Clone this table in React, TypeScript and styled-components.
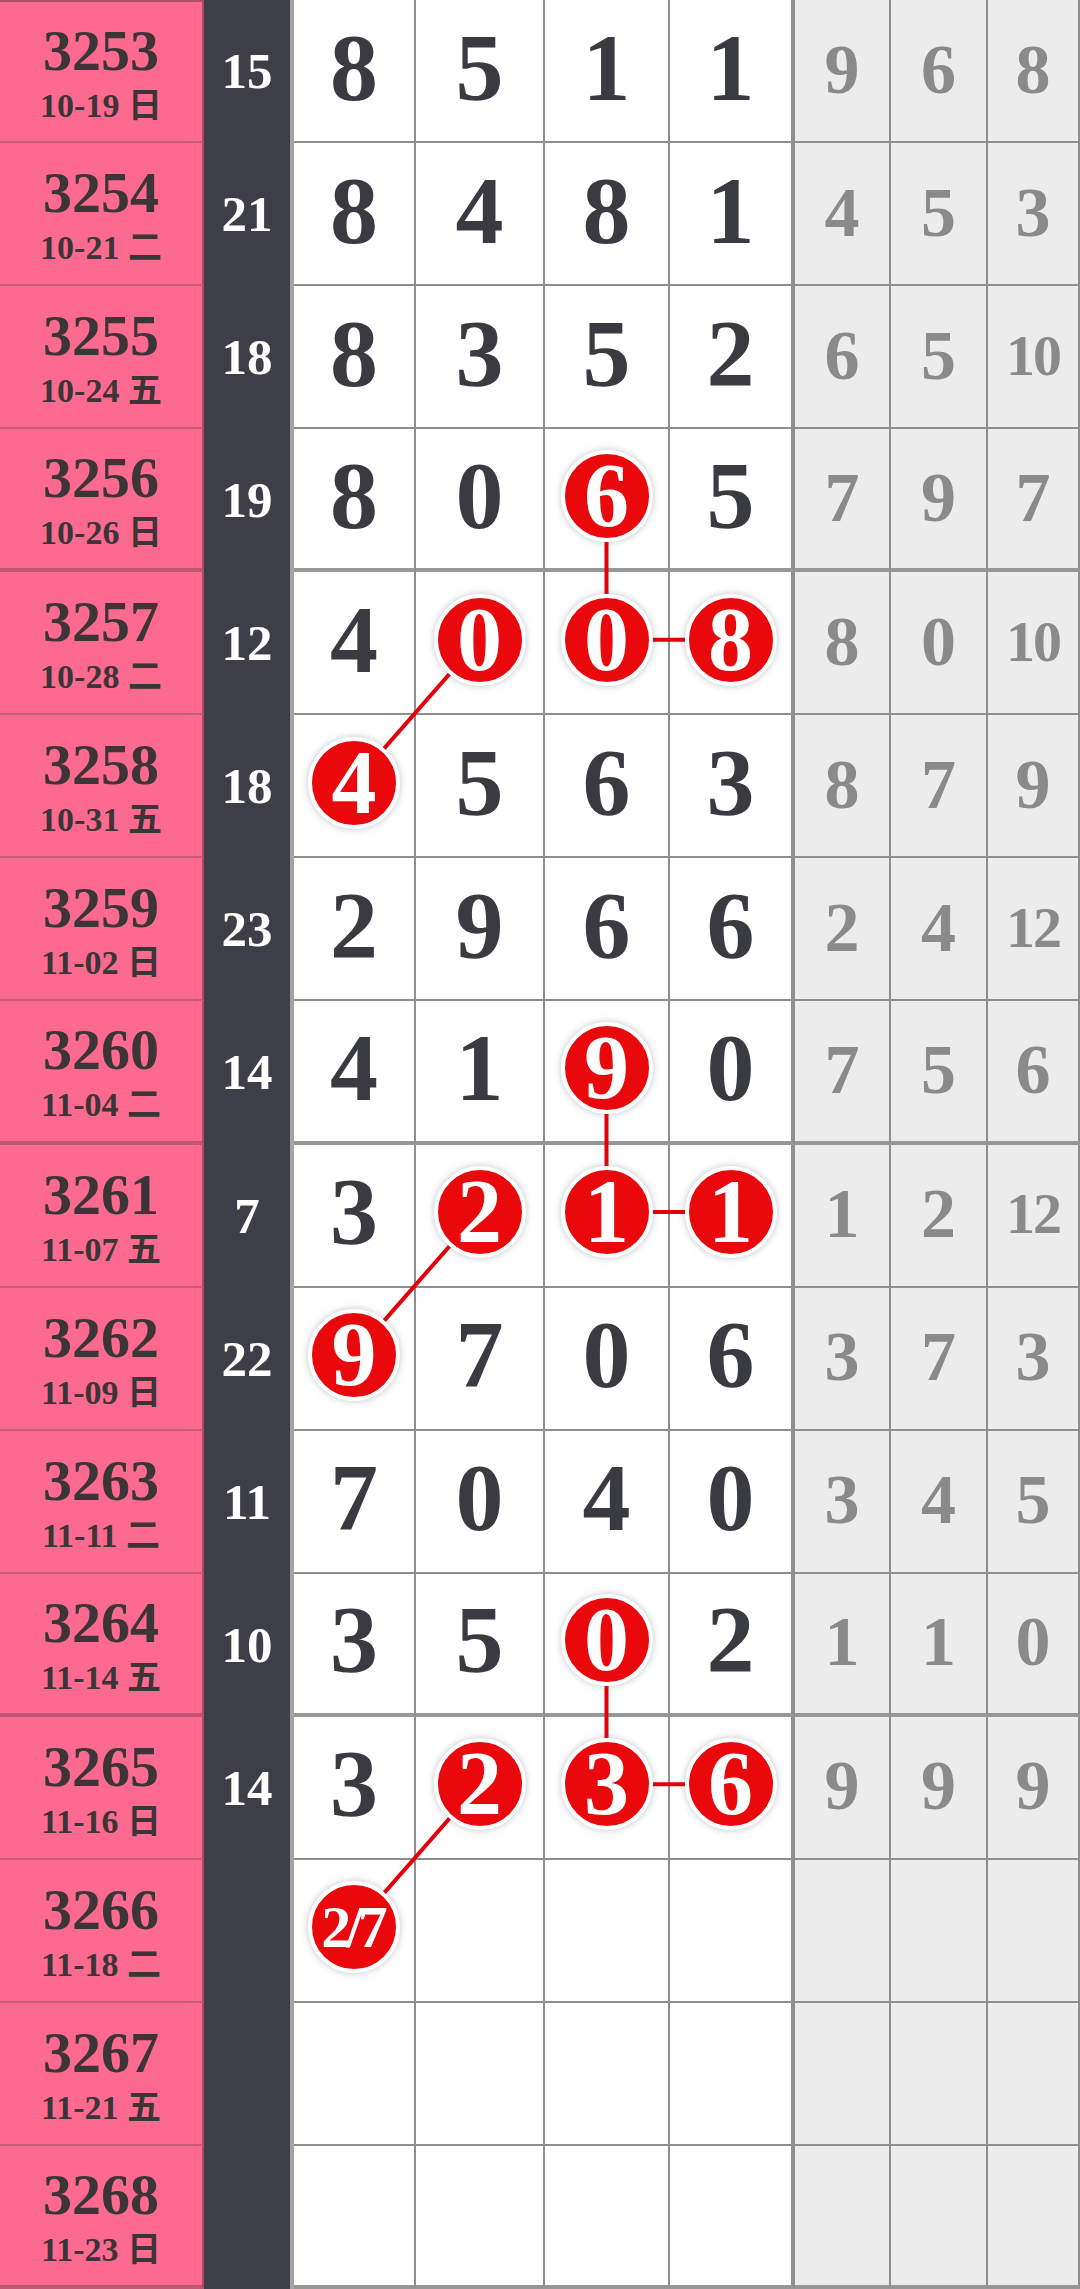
import React from 'react'
import styled, { createGlobalStyle } from 'styled-components'

const ROW_H = 2289 / 16
const COLS = [204, 90, 122, 129, 125, 125, 96, 97, 92]
const BORDERS = [2, 4, 2, 2, 2, 4, 2, 2, 2]

type Row = {
  id: string
  date: string
  wd: string
  sum: string
  d: string[]
  g: string[]
  balls?: number[]
}

const ROWS: Row[] = [
  { id: '3253', date: '10-19', wd: '日', sum: '15', d: ['8', '5', '1', '1'], g: ['9', '6', '8'] },
  { id: '3254', date: '10-21', wd: '二', sum: '21', d: ['8', '4', '8', '1'], g: ['4', '5', '3'] },
  { id: '3255', date: '10-24', wd: '五', sum: '18', d: ['8', '3', '5', '2'], g: ['6', '5', '10'] },
  { id: '3256', date: '10-26', wd: '日', sum: '19', d: ['8', '0', '6', '5'], g: ['7', '9', '7'], balls: [2] },
  { id: '3257', date: '10-28', wd: '二', sum: '12', d: ['4', '0', '0', '8'], g: ['8', '0', '10'], balls: [1, 2, 3] },
  { id: '3258', date: '10-31', wd: '五', sum: '18', d: ['4', '5', '6', '3'], g: ['8', '7', '9'], balls: [0] },
  { id: '3259', date: '11-02', wd: '日', sum: '23', d: ['2', '9', '6', '6'], g: ['2', '4', '12'] },
  { id: '3260', date: '11-04', wd: '二', sum: '14', d: ['4', '1', '9', '0'], g: ['7', '5', '6'], balls: [2] },
  { id: '3261', date: '11-07', wd: '五', sum: '7', d: ['3', '2', '1', '1'], g: ['1', '2', '12'], balls: [1, 2, 3] },
  { id: '3262', date: '11-09', wd: '日', sum: '22', d: ['9', '7', '0', '6'], g: ['3', '7', '3'], balls: [0] },
  { id: '3263', date: '11-11', wd: '二', sum: '11', d: ['7', '0', '4', '0'], g: ['3', '4', '5'] },
  { id: '3264', date: '11-14', wd: '五', sum: '10', d: ['3', '5', '0', '2'], g: ['1', '1', '0'], balls: [2] },
  { id: '3265', date: '11-16', wd: '日', sum: '14', d: ['3', '2', '3', '6'], g: ['9', '9', '9'], balls: [1, 2, 3] },
  { id: '3266', date: '11-18', wd: '二', sum: '', d: ['2/7', '', '', ''], g: ['', '', ''], balls: [0] },
  { id: '3267', date: '11-21', wd: '五', sum: '', d: ['', '', '', ''], g: ['', '', ''] },
  { id: '3268', date: '11-23', wd: '日', sum: '', d: ['', '', '', ''], g: ['', '', ''] },
]

// rows where a pattern starts: 6 -> 0-0-8 -> 4
const LINK_ROWS = [3, 7, 11]

const GlobalStyle = createGlobalStyle`
  html, body {
    margin: 0;
    background: #fff;
  }
  body {
    font-family: "Liberation Serif", "Noto Sans CJK SC", serif;
  }
`

const Board = styled.div`
  position: relative;
  width: 1080px;
  height: 2289px;
  overflow: hidden;
  display: grid;
  grid-template-columns: ${COLS.map((c) => `${c}px`).join(' ')};
  grid-template-rows: repeat(16, 1fr);
  font-weight: 700;
`

const IssueCell = styled.div<{ $end: boolean; $first: boolean }>`
  box-sizing: border-box;
  background: #fc6b8f;
  border-right: 2px solid #a94a63;
  border-top: ${({ $first }) => ($first ? '2px solid #b25068' : 'none')};
  border-bottom: ${({ $end }) => ($end ? '4px solid #bd5670' : '2px solid #c65c77')};
  padding-top: 5px;
  display: flex;
  flex-direction: column;
  align-items: center;
  justify-content: center;
  gap: 6px;
  color: #3b3537;
`

const Issue = styled.div`
  font-size: 58px;
  line-height: 58px;
`

const DateText = styled.div`
  font-size: 34px;
  line-height: 40px;
  white-space: nowrap;
`

const SumCell = styled.div`
  box-sizing: border-box;
  background: #3e3e48;
  border-right: 4px solid #a3a3a3;
  display: flex;
  align-items: center;
  justify-content: center;
  color: #fff;
  font-size: 51px;
  line-height: 1;
`

const DrawCell = styled.div<{ $end: boolean; $last: boolean }>`
  box-sizing: border-box;
  background: #fff;
  border-right: ${({ $last }) => ($last ? '4px solid #8f8f8f' : '2px solid #8e8e8e')};
  border-bottom: ${({ $end }) => ($end ? '4px solid #979797' : '2px solid #8e8e8e')};
  padding-bottom: 6px;
  display: flex;
  align-items: center;
  justify-content: center;
  color: #3a3a41;
  font-size: 96px;
  line-height: 1;
`

const GapCell = styled.div<{ $end: boolean; $wide: boolean }>`
  box-sizing: border-box;
  background: #ececec;
  border-right: 2px solid #8e8e8e;
  border-bottom: ${({ $end }) => ($end ? '4px solid #979797' : '2px solid #8e8e8e')};
  padding-bottom: 2px;
  display: flex;
  align-items: center;
  justify-content: center;
  color: #8a8a8a;
  font-size: ${({ $wide }) => ($wide ? '58px' : '70px')};
  letter-spacing: ${({ $wide }) => ($wide ? '-2px' : '0')};
  line-height: 1;
`

const Ball = styled.span<{ $small: boolean }>`
  position: relative;
  z-index: 2;
  width: 84px;
  height: 84px;
  flex-shrink: 0;
  border-radius: 50%;
  background: #e9080b;
  border: 4px solid #fff;
  box-shadow: 0 0 7px rgba(60, 90, 90, 0.35);
  display: flex;
  align-items: center;
  justify-content: center;
  color: #fff;
  font-size: ${({ $small }) => ($small ? '60px' : '90px')};
  letter-spacing: ${({ $small }) => ($small ? '-5px' : '0')};
  text-indent: ${({ $small }) => ($small ? '-4px' : '0')};
  line-height: 1;
`

const Links = styled.svg`
  position: absolute;
  left: 0;
  top: 0;
  z-index: 1;
  pointer-events: none;
`

function colCenter(i: number) {
  const left = COLS.slice(0, i).reduce((a, b) => a + b, 0)
  return left + (COLS[i] - BORDERS[i]) / 2
}

function rowCenter(r: number) {
  return r * ROW_H + 67.5
}

export default function App() {
  const x = [colCenter(2), colCenter(3), colCenter(4), colCenter(5)]
  return (
    <>
      <GlobalStyle />
      <Board>
        {ROWS.map((row, r) => {
          const end = r % 4 === 3
          return (
            <React.Fragment key={row.id}>
              <IssueCell $end={end} $first={r === 0}>
                <Issue>{row.id}</Issue>
                <DateText>
                  {row.date} {row.wd}
                </DateText>
              </IssueCell>
              <SumCell>{row.sum}</SumCell>
              {row.d.map((v, c) => (
                <DrawCell key={c} $end={end} $last={c === 3}>
                  {row.balls?.includes(c) ? <Ball $small={v.length > 1}>{v}</Ball> : v}
                </DrawCell>
              ))}
              {row.g.map((v, c) => (
                <GapCell key={c} $end={end} $wide={v.length > 1}>
                  {v}
                </GapCell>
              ))}
            </React.Fragment>
          )
        })}
        <Links width={1080} height={2289} viewBox="0 0 1080 2289">
          {LINK_ROWS.map((r) => (
            <g key={r} stroke="#e4000b" strokeWidth={4}>
              <line x1={x[2]} y1={rowCenter(r)} x2={x[2]} y2={rowCenter(r + 1)} />
              <line x1={x[2]} y1={rowCenter(r + 1)} x2={x[3]} y2={rowCenter(r + 1)} />
              <line x1={x[1]} y1={rowCenter(r + 1)} x2={x[0]} y2={rowCenter(r + 2)} />
            </g>
          ))}
        </Links>
      </Board>
    </>
  )
}
